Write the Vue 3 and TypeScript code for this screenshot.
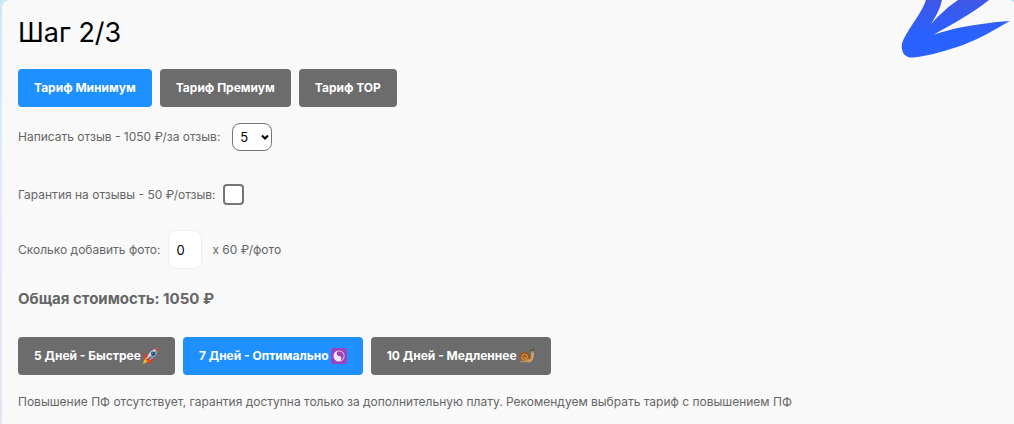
<script setup lang="ts">
import { ref } from 'vue'

const tariffs = ['Тариф Минимум', 'Тариф Премиум', 'Тариф TOP']
const speeds = [
  { label: '5 Дней - Быстрее', icon: 'rocket' },
  { label: '7 Дней - Оптимально', icon: 'yinyang' },
  { label: '10 Дней - Медленнее', icon: 'snail' },
]
const counts = [1, 2, 3, 4, 5, 6, 7, 8, 9, 10]

const tariff = ref(0)
const speed = ref(1)
const reviews = ref(5)
const guarantee = ref(false)
const photos = ref('0')
</script>

<template>
  <div class="page">
    <main class="card">
      <svg class="arrow" viewBox="0 0 134 70" aria-hidden="true">
        <defs>
          <linearGradient id="arrowFill" x1="0" y1="0" x2="0" y2="1">
            <stop offset="0" stop-color="#3f57e8" />
            <stop offset="0.65" stop-color="#2962ff" />
          </linearGradient>
        </defs>
        <path
          fill="url(#arrowFill)"
          d="M46 0C42 12 34 21 27 33C23 40 21 44 22 49C23 55 27 58 33 57.500C50 56 68 50 83 45C99 39 114 30 130 21C112 22 95 25 80 27.500C71 29 63 32 54 34.500C72 24 92 14 109 0H78C69 6 59 15 51 24C56 16 60 9 62 0Z"
        />
        <path fill="#a9dfe8" d="M131 0H134V2Z" />
      </svg>

      <h1>Шаг 2/3</h1>

      <div class="buttons">
        <button
          v-for="(name, i) in tariffs"
          :key="name"
          type="button"
          :class="{ active: tariff === i }"
          @click="tariff = i"
        >{{ name }}</button>
      </div>

      <div class="row row-reviews">
        <label for="reviews">Написать отзыв - 1050 ₽/за отзыв:</label>
        <span class="select-wrap">
          <select id="reviews" v-model="reviews">
            <option v-for="n in counts" :key="n" :value="n">{{ n }}</option>
          </select>
          <svg class="chevron" viewBox="0 0 8 6" aria-hidden="true">
            <path d="M1 1.500L4 4.500L7 1.500" fill="none" stroke="#000" stroke-width="2" />
          </svg>
        </span>
      </div>

      <div class="row row-guarantee">
        <label for="guarantee">Гарантия на отзывы - 50 ₽/отзыв:</label>
        <input id="guarantee" v-model="guarantee" type="checkbox" />
      </div>

      <div class="row row-photos">
        <label for="photos">Сколько добавить фото:</label>
        <input id="photos" v-model="photos" type="text" inputmode="numeric" />
        <span>x 60 ₽/фото</span>
      </div>

      <p class="total">Общая стоимость: 1050 ₽</p>

      <div class="buttons">
        <button
          v-for="(item, i) in speeds"
          :key="item.icon"
          type="button"
          :class="{ active: speed === i }"
          @click="speed = i"
        >
          {{ item.label }}
          <svg v-if="item.icon === 'rocket'" viewBox="0 0 16 16" aria-hidden="true">
            <path fill="#f5b72e" d="M4 9L1 12L0 16L4 14L7 12Z" />
            <path fill="#e9472c" d="M4 8L0 10L2 12ZM8 12L5 16L4 13Z" />
            <path fill="#d63b2d" d="M6 5L2 7L1 10L5 8ZM11 10L10 13L6 15L8 11Z" />
            <path fill="#c5d1dc" d="M4 10C5 5 9 1 15 0.500C15 6 11 11 6 12Z" />
            <path fill="#7890a8" d="M6 12C11 11 15 6 15 0.500L5 11Z" />
            <path fill="#dc3b30" d="M12 1.200L15.500 0L14.500 4Z" />
            <circle cx="10" cy="5.500" r="1.900" fill="#173e61" />
            <circle cx="9.700" cy="5.200" r="0.800" fill="#55aee0" />
            <path fill="#b32926" d="M3 12L8 8L5 13Z" />
          </svg>
          <svg v-else-if="item.icon === 'yinyang'" viewBox="0 0 16 16" aria-hidden="true">
            <rect width="16" height="16" rx="2" fill="#9c42be" />
            <circle cx="8" cy="8" r="5.500" fill="#f6eafa" />
            <path fill="#9c42be" d="M8 3.200A4.800 4.800 0 0 1 8 12.800A2.400 2.400 0 0 0 8 8A2.400 2.400 0 0 1 8 3.200Z" />
            <circle cx="8" cy="5.600" r="0.900" fill="#9c42be" />
            <circle cx="8.300" cy="10.400" r="0.900" fill="#f6eafa" />
          </svg>
          <svg v-else viewBox="0 0 16 16" aria-hidden="true">
            <path fill="#c9a06a" d="M0 14C3 12 9 13 11.500 11C12.500 9.500 11.500 7 12 5C12.500 3.500 15 3.800 15 5.500C15 8 14.500 14 10.500 14.200Z" />
            <path d="M12.600 5L11.800 2.500M14 5L14.500 2" fill="none" stroke="#b58a55" stroke-width="0.800" />
            <circle cx="11.800" cy="2.300" r="0.800" fill="#4b301a" />
            <circle cx="14.600" cy="1.600" r="0.800" fill="#4b301a" />
            <ellipse cx="5.800" cy="8.800" rx="5.300" ry="4.700" fill="#9b571e" />
            <path d="M10 11C6 14 1.500 11 3 8C4.500 5 9 6.500 8.300 9C7.500 11.500 4.500 10.500 5.500 8.700" fill="none" stroke="#dc9a4c" stroke-width="1.100" />
          </svg>
        </button>
      </div>

      <p class="note">Повышение ПФ отсутствует, гарантия доступна только за дополнительную плату. Рекомендуем выбрать тариф с повышением ПФ</p>
    </main>
  </div>
</template>

<style>
body {
  margin: 0;
}
</style>

<style scoped>
.page {
  padding-left: 2px;
  background: linear-gradient(#cfe8f3, #e2eaf8 45%, #e8e2f3);
  font-family: Inter, "Noto Sans", sans-serif;
  font-size: 12px;
  line-height: 20px;
  color: #666;
}
.card {
  position: relative;
  box-sizing: border-box;
  min-height: 100vh;
  padding: 13px 16px 12px;
  background: #f9f9f9;
  border-radius: 8px 0 0 0;
}
.arrow {
  position: absolute;
  top: 0;
  right: 0;
  width: 134px;
  height: 70px;
}
h1 {
  margin: 0 0 16px;
  font-size: 27px;
  line-height: 40px;
  font-weight: 400;
  color: #000;
}
.buttons {
  display: flex;
  flex-wrap: wrap;
  gap: 8px;
}
button {
  display: flex;
  align-items: center;
  gap: 2px;
  height: 38px;
  padding: 0 16px;
  border: 0;
  border-radius: 4px;
  background: #6c6c6c;
  color: #fff;
  font: 700 12px/20px Inter, "Noto Sans", sans-serif;
  cursor: pointer;
}
button.active {
  background: #1e90ff;
}
button svg {
  width: 16px;
  height: 16px;
}
.row {
  display: flex;
  align-items: center;
}
.row-reviews {
  gap: 12px;
  margin-top: 16px;
}
.row-guarantee {
  gap: 7px;
  margin-top: 33px;
}
.row-photos {
  gap: 8px;
  margin-top: 25px;
}
.row-photos span {
  margin-left: 2px;
}
.select-wrap {
  display: grid;
  align-items: center;
}
select,
input {
  box-sizing: border-box;
  margin: 0;
  appearance: none;
  background: #fff;
  color: #000;
  font: 400 13px/20px Inter, "Noto Sans", sans-serif;
}
select {
  grid-area: 1 / 1;
  width: 40px;
  height: 28px;
  padding: 0 7px;
  border: 1px solid #767676;
  border-radius: 8px;
}
.chevron {
  grid-area: 1 / 1;
  justify-self: end;
  width: 8px;
  height: 6px;
  margin-right: 3px;
  pointer-events: none;
}
input[type="checkbox"] {
  width: 21px;
  height: 21px;
  border: 2px solid #767676;
  border-radius: 4px;
}
input[type="checkbox"]:checked {
  background: #1e90ff;
}
input[type="text"] {
  width: 34px;
  height: 39px;
  padding: 0 7px;
  border: 1px solid #eee;
  border-radius: 8px;
}
.total {
  margin: 20px 0 28px;
  font-size: 15px;
  font-weight: 700;
}
.note {
  margin: 17px 0 0;
}
</style>
